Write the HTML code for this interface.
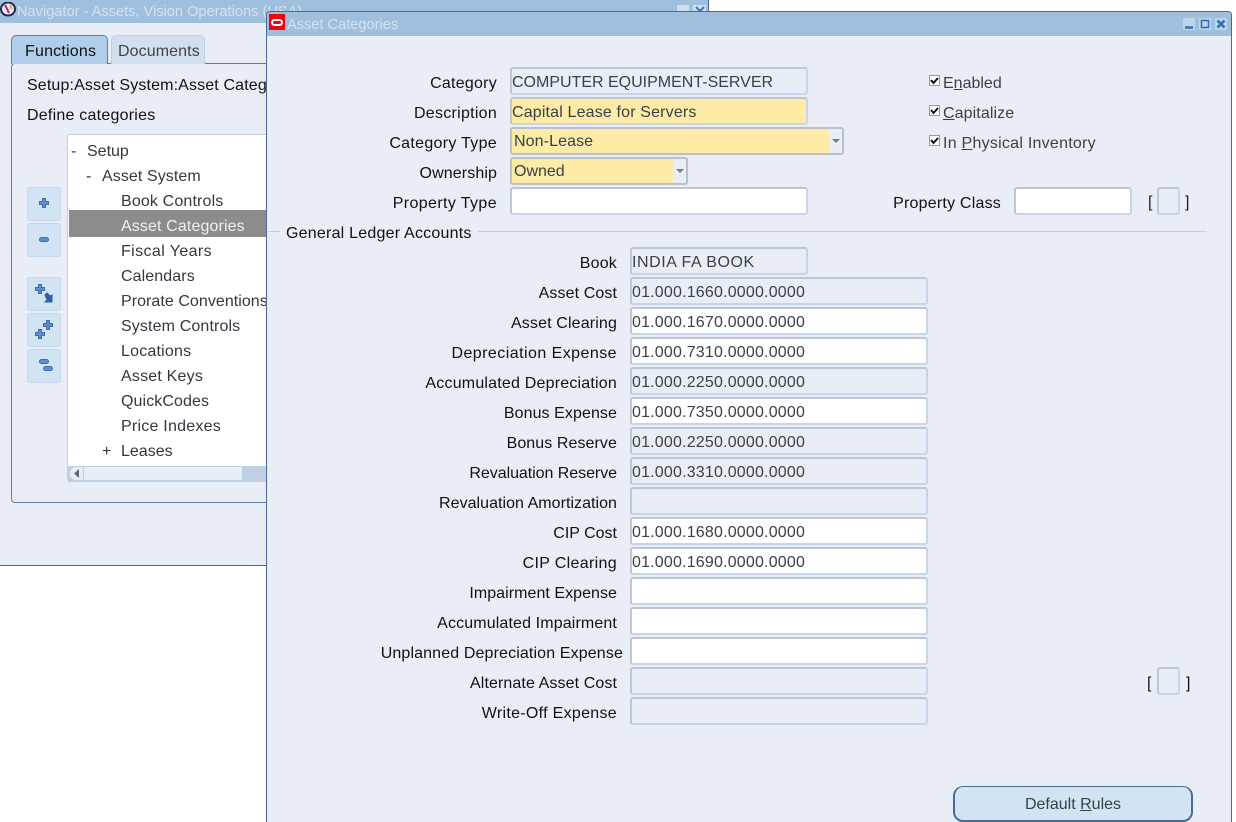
<!DOCTYPE html>
<html><head><meta charset="utf-8"><style>
html,body{margin:0;padding:0;background:#fff;width:1236px;height:822px;overflow:hidden}
body{position:relative;font:16px/24px "Liberation Sans",Arial,sans-serif;color:#33373f}
div{position:absolute;box-sizing:border-box;white-space:nowrap}
.l{text-align:right;color:#111;height:20px;margin-top:2px}
.f{height:28px;border:2px solid #c6d5e7;border-top-color:#bcc6d4;border-left-color:#bcc6d4;border-radius:3px;padding:2px 0 0 0;color:#3a4049}
.w{background:#fff}.r{background:#e9eef6}.y{background:#fdeba6}
.n{letter-spacing:.19px}
.t{left:121px;color:#33373f;margin-top:2px}
.b{left:27px;width:34px;height:34px;background:#d2e3f3;border:1px solid #c6d7ea;border-radius:3px}
</style></head><body>
<!-- Navigator -->
<div style="left:0;top:0;width:709px;height:566px;background:#e9eef6;border-bottom:1px solid #4a6a94;border-right:1px solid #4a6a94"></div>
<div style="left:0;top:0;width:708px;height:23px;background:#9fbfdd"></div>
<svg style="position:absolute;left:0;top:2px" width="16" height="15"><ellipse cx="8" cy="7" rx="7" ry="6.500" fill="#eeeef6" stroke="#26265c" stroke-width="2"/><path d="M5 3L9 11" stroke="#c8207a" stroke-width="2"/><path d="M10 3L12 7" stroke="#d8b040" stroke-width="2"/></svg>
<div style="left:17px;top:0;font-size:14.600px;color:#d5e2f0">Navigator - Assets, Vision Operations (USA)</div>
<div style="left:677px;top:5px;width:12px;height:7px;background:#cfe0f0"></div>
<div style="left:693px;top:5px;width:13px;height:7px;background:#cfe0f0"></div>
<svg style="position:absolute;left:693px;top:5px" width="13" height="7"><path d="M3 2L7 6L11 2" fill="none" stroke="#3a78b8" stroke-width="2"/></svg>
<!-- tabs -->
<div style="left:11px;top:63px;width:270px;height:440px;border:1px solid #5f7da3;border-radius:4px;background:#e9eef6"></div>
<div style="left:11px;top:35px;width:97px;height:29px;background:#b0cee9;border:1px solid #5f7da3;border-bottom:0;border-radius:5px 5px 0 0;color:#111;padding:4px 0 0 13px;letter-spacing:.2px">Functions</div>
<div style="left:111px;top:35px;width:94px;height:29px;background:#d2dfef;border:1px solid #c0d0e4;border-bottom:0;border-radius:5px 5px 0 0;padding:4px 0 0 6px;color:#444;letter-spacing:.1px">Documents</div>
<div style="left:27px;top:74px;color:#111;letter-spacing:.14px">Setup:Asset System:Asset Categories</div>
<div style="left:27px;top:104px;color:#111;letter-spacing:.23px">Define categories</div>
<!-- tree -->
<div style="left:67px;top:134px;width:210px;height:348px;background:#fff;border:1px solid #c0d0e4;border-radius:3px"></div>
<div style="left:69px;top:210px;width:200px;height:27px;background:#8c8c8c"></div>
<div style="left:71px;top:140px">-</div><div style="left:87px;top:140px">Setup</div>
<div style="left:86px;top:165px">-</div><div style="left:102px;top:165px;letter-spacing:.08px">Asset System</div>
<div class="t" style="top:188px;letter-spacing:.15px">Book Controls</div>
<div class="t" style="top:213px;color:#f0f0f0;letter-spacing:.12px">Asset Categories</div>
<div class="t" style="top:238px;letter-spacing:.4px">Fiscal Years</div>
<div class="t" style="top:263px;letter-spacing:.1px">Calendars</div>
<div class="t" style="top:288px;letter-spacing:.05px">Prorate Conventions</div>
<div class="t" style="top:313px;letter-spacing:.13px">System Controls</div>
<div class="t" style="top:338px;letter-spacing:.2px">Locations</div>
<div class="t" style="top:363px;letter-spacing:.2px">Asset Keys</div>
<div class="t" style="top:388px;letter-spacing:.1px">QuickCodes</div>
<div class="t" style="top:413px;letter-spacing:.23px">Price Indexes</div>
<div style="left:102px;top:440px">+</div><div class="t" style="top:438px">Leases</div>
<div style="left:68px;top:466px;width:210px;height:16px;background:#c0d0e4"></div>
<div style="left:84px;top:467px;width:158px;height:13px;background:#e9eef6"></div>
<div style="left:70px;top:467px;width:13px;height:13px;background:#e9eef6;border-radius:6px 0 0 6px"></div>
<svg style="position:absolute;left:74px;top:469px" width="6" height="10"><path d="M5 0V9L0 4.5Z" fill="#667"/></svg>
<!-- buttons -->
<div class="b" style="top:187px"></div><div class="b" style="top:223px"></div><div class="b" style="top:277px"></div><div class="b" style="top:313px"></div><div class="b" style="top:349px"></div>
<svg style="position:absolute;left:0;top:0" width="70" height="390" fill="#5c8fce" stroke="#3f6ea8" stroke-width="1">
<path d="M42.500 198.500h3v3h3v3h-3v3h-3v-3h-3v-3h3z"/>
<rect x="39.500" y="237.500" width="9" height="4" rx="2"/>
<path d="M38.500 284.500h3v3h3v3h-3v3h-3v-3h-3v-3h3z"/>
<path d="M45 295l2-2 3 3 2-1v7h-7l2-2z" fill="#2f62a4" stroke="#2f62a4"/>
<path d="M46.500 320.500h3v3h3v3h-3v3h-3v-3h-3v-3h3z"/>
<path d="M38.500 329.500h3v3h3v3h-3v3h-3v-3h-3v-3h3z"/>
<rect x="39.500" y="359.500" width="9" height="4" rx="2"/>
<rect x="43.500" y="366.500" width="9" height="4" rx="2"/>
</svg>
<!-- Asset Categories window -->
<div style="left:266px;top:11px;width:966px;height:811px;background:#e9eef6;border:1px solid #4a6a94;border-bottom:0;border-radius:4px 4px 0 0"></div>
<div style="left:267px;top:12px;width:964px;height:24px;background:#9fbfdd;border-radius:3px 3px 0 0"></div>
<div style="left:269px;top:14px;width:16px;height:16px;background:#f5000f"></div>
<div style="left:271px;top:19px;width:12px;height:7px;border:2px solid #fff;border-radius:4px"></div>
<div style="left:287px;top:13px;color:#d5e2f0;font-size:14.600px">Asset Categories</div>
<div style="left:1183px;top:18px;width:12px;height:12px;background:#bcd5eb"></div>
<div style="left:1199px;top:18px;width:12px;height:12px;background:#bcd5eb"></div>
<div style="left:1215px;top:18px;width:12px;height:12px;background:#bcd5eb"></div>
<svg style="position:absolute;left:1183px;top:18px" width="44" height="12" fill="none" stroke="#2f6fb0"><path d="M2 9.500H10" stroke-width="2.500"/><path d="M18.500 2.500h7v7h-7z" stroke-width="1.500"/><path d="M34.500 2.500L41.500 9.500M41.500 2.500L34.500 9.500" stroke-width="2.500"/></svg>
<!-- labels block 1 -->
<div class="l" style="right:739px;top:70px;letter-spacing:.25px">Category</div>
<div class="l" style="right:739px;top:100px;letter-spacing:.27px">Description</div>
<div class="l" style="right:739px;top:130px;letter-spacing:.3px">Category Type</div>
<div class="l" style="right:739px;top:160px;letter-spacing:.11px">Ownership</div>
<div class="l" style="right:739px;top:190px;letter-spacing:.38px">Property Type</div>
<div class="f r" style="left:510px;top:67px;width:298px">COMPUTER EQUIPMENT-SERVER</div>
<div class="f y" style="left:510px;top:97px;width:298px;letter-spacing:.16px">Capital Lease for Servers</div>
<div class="f r" style="left:510px;top:127px;width:334px;border-color:#b8c0cc"><div class="y" style="left:0;top:0;width:317px;height:24px;padding:1px 0 0 2px;letter-spacing:.1px">Non-Lease</div></div>
<svg style="position:absolute;left:832px;top:139px" width="8" height="5"><path d="M0 0H8L4 4Z" fill="#777f8c"/></svg>
<div class="f r" style="left:510px;top:157px;width:178px;border-color:#b8c0cc"><div class="y" style="left:0;top:0;width:161px;height:24px;padding:1px 0 0 2px">Owned</div></div>
<svg style="position:absolute;left:676px;top:169px" width="8" height="5"><path d="M0 0H8L4 4Z" fill="#777f8c"/></svg>
<div class="f w" style="left:510px;top:187px;width:298px"></div>
<!-- checks -->
<div style="left:929px;top:75px;width:11px;height:11px;background:#fff;border:1px solid #9a9a9a"></div>
<div style="left:929px;top:105px;width:11px;height:11px;background:#fff;border:1px solid #9a9a9a"></div>
<div style="left:929px;top:135px;width:11px;height:11px;background:#fff;border:1px solid #9a9a9a"></div>
<svg style="position:absolute;left:929px;top:75px" width="11" height="72" fill="none" stroke="#111" stroke-width="2"><path d="M2 5l2.500 3L9 3M2 35l2.500 3L9 33M2 65l2.500 3L9 63"/></svg>
<div style="left:943px;top:72px;color:#3a4049">E<u>n</u>abled</div>
<div style="left:943px;top:102px;color:#3a4049;letter-spacing:.1px"><u>C</u>apitalize</div>
<div style="left:943px;top:132px;color:#3a4049;letter-spacing:.25px">In <u>P</u>hysical Inventory</div>
<div class="l" style="right:235px;top:190px;letter-spacing:.21px">Property Class</div>
<div class="f w" style="left:1014px;top:187px;width:118px"></div>
<div style="left:1148px;top:191px;color:#123">[</div>
<div class="f" style="left:1157px;top:187px;width:23px"></div>
<div style="left:1185px;top:191px;color:#123">]</div>
<!-- GL -->
<div style="left:268px;top:231px;width:939px;height:1px;background:#c0d0e4"></div>
<div style="left:280px;top:222px;padding:0 6px;height:23px;background:#e9eef6;color:#111;letter-spacing:.22px">General Ledger Accounts</div>
<div class="l" style="right:619px;top:250px;letter-spacing:.2px">Book</div>
<div class="l" style="right:619px;top:280px;letter-spacing:.1px">Asset Cost</div>
<div class="l" style="right:619px;top:310px;letter-spacing:.14px">Asset Clearing</div>
<div class="l" style="right:619px;top:340px;letter-spacing:.45px">Depreciation Expense</div>
<div class="l" style="right:619px;top:370px;letter-spacing:.2px">Accumulated Depreciation</div>
<div class="l" style="right:619px;top:400px;letter-spacing:.08px">Bonus Expense</div>
<div class="l" style="right:619px;top:430px;letter-spacing:.08px">Bonus Reserve</div>
<div class="l" style="right:619px;top:460px;letter-spacing:-.05px">Revaluation Reserve</div>
<div class="l" style="right:619px;top:490px;letter-spacing:.04px">Revaluation Amortization</div>
<div class="l" style="right:619px;top:520px">CIP Cost</div>
<div class="l" style="right:619px;top:550px;letter-spacing:.33px">CIP Clearing</div>
<div class="l" style="right:619px;top:580px;letter-spacing:.05px">Impairment Expense</div>
<div class="l" style="right:619px;top:610px;letter-spacing:.13px">Accumulated Impairment</div>
<div class="l" style="right:613px;top:640px;letter-spacing:.13px">Unplanned Depreciation Expense</div>
<div class="l" style="right:619px;top:670px;letter-spacing:.1px">Alternate Asset Cost</div>
<div class="l" style="right:619px;top:700px;letter-spacing:.3px">Write-Off Expense</div>
<div class="f r" style="left:630px;top:247px;width:178px;letter-spacing:.55px">INDIA FA BOOK</div>
<div class="f r n" style="left:630px;top:277px;width:298px">01.000.1660.0000.0000</div>
<div class="f w n" style="left:630px;top:307px;width:298px">01.000.1670.0000.0000</div>
<div class="f w n" style="left:630px;top:337px;width:298px">01.000.7310.0000.0000</div>
<div class="f r n" style="left:630px;top:367px;width:298px">01.000.2250.0000.0000</div>
<div class="f w n" style="left:630px;top:397px;width:298px">01.000.7350.0000.0000</div>
<div class="f r n" style="left:630px;top:427px;width:298px">01.000.2250.0000.0000</div>
<div class="f r n" style="left:630px;top:457px;width:298px">01.000.3310.0000.0000</div>
<div class="f r" style="left:630px;top:487px;width:298px"></div>
<div class="f w n" style="left:630px;top:517px;width:298px">01.000.1680.0000.0000</div>
<div class="f w n" style="left:630px;top:547px;width:298px">01.000.1690.0000.0000</div>
<div class="f w" style="left:630px;top:577px;width:298px"></div>
<div class="f w" style="left:630px;top:607px;width:298px"></div>
<div class="f w" style="left:630px;top:637px;width:298px"></div>
<div class="f r" style="left:630px;top:667px;width:298px"></div>
<div class="f r" style="left:630px;top:697px;width:298px"></div>
<div style="left:1147px;top:672px;color:#111">[</div>
<div class="f" style="left:1157px;top:667px;width:23px"></div>
<div style="left:1186px;top:672px;color:#111">]</div>
<div style="left:953px;top:786px;width:240px;height:36px;background:#d2e3f3;border:2px solid #4a6a94;border-top-width:1px;border-radius:10px;text-align:center;padding-top:6px;color:#3a4049">Default <u>R</u>ules</div>
</body></html>
